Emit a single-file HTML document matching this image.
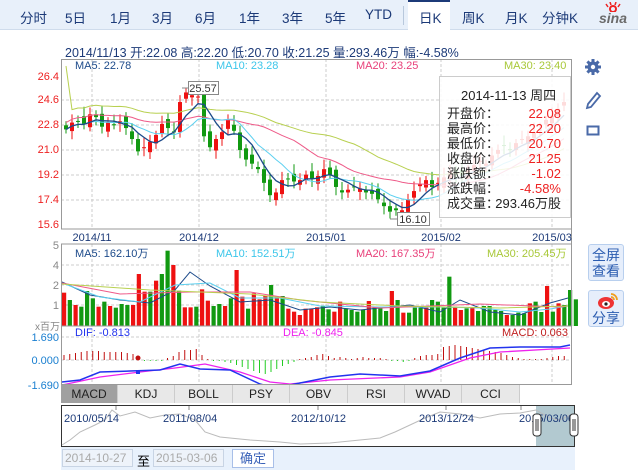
<!DOCTYPE html>
<html><head><meta charset="utf-8"><style>
*{margin:0;padding:0;box-sizing:border-box}
body{width:638px;height:471px;background:#fff;font-family:"Liberation Sans","Noto Sans CJK SC",sans-serif;position:relative;overflow:hidden}
.a{position:absolute;white-space:nowrap}
#nav{position:absolute;left:0;top:0;width:638px;height:30px;background:#e8f0fa;border-bottom:1px solid #cfdcec}
#nav span{position:absolute;top:7px;font-size:13.5px;color:#1c3a78}
.btn{position:absolute;left:588px;width:36px;background:#e6eefb;border:1px solid #b8cfee;border-radius:3px;color:#2b5cb0;font-size:14px;line-height:16px;text-align:center}
.tab{position:absolute;top:385px;height:18px;background:#e8e8e8;border-right:1px solid #ccc;font-size:12px;text-align:center;line-height:18px;color:#222}
</style></head><body>
<div id="nav">
<span style="left:20px">分时</span><span style="left:65px">5日</span><span style="left:110px">1月</span><span style="left:152px">3月</span><span style="left:195px">6月</span><span style="left:239px">1年</span><span style="left:282px">3年</span><span style="left:325px">5年</span><span style="left:365px">YTD</span>
<div style="position:absolute;left:403px;top:6px;width:1px;height:19px;background:#b8c8dc"></div>
<div style="position:absolute;left:408px;top:0;width:42px;height:31px;background:#fff;border-top:2px solid #1c3a78"></div>
<span style="left:419px">日K</span><span style="left:462px">周K</span><span style="left:505px">月K</span><span style="left:542px">分钟K</span>
<span style="left:599px;top:10px;font-size:14px;font-style:italic;font-weight:bold;color:#6b6b6b">sina</span>
<svg style="position:absolute;left:605px;top:2px" width="16" height="10"><circle cx="8" cy="7" r="3" fill="none" stroke="#e22" stroke-width="2"/><path d="M3 5L1 2M6 3L5 0M10 3L11 0M13 5L15 2" stroke="#e22" stroke-width="1.5"/></svg>
</div>
<div class="a" style="left:65px;top:42px;font-size:12.5px;color:#1c3a78">2014/11/13 开:22.08 高:22.20 低:20.70 收:21.25 量:293.46万 幅:-4.58%</div>
<svg id="ch" class="a" style="left:0;top:0" width="638" height="471"></svg>
<div class="a" style="left:75px;top:60px;font-size:11px;color:#1c4a8a">MA5: 22.78</div>
<div class="a" style="left:216px;top:60px;font-size:11px;color:#3cc6ea">MA10: 23.28</div>
<div class="a" style="left:356px;top:60px;font-size:11px;color:#e8407a">MA20: 23.25</div>
<div class="a" style="left:504px;top:60px;font-size:11px;color:#a8c838">MA30: 23.40</div>
<div class="a" style="left:75px;top:245px;font-size:11px;color:#1c4a8a">MA5: 162.10万</div>
<div class="a" style="left:216px;top:245px;font-size:11px;color:#3cc6ea">MA10: 152.51万</div>
<div class="a" style="left:356px;top:245px;font-size:11px;color:#e8407a">MA20: 167.35万</div>
<div class="a" style="left:487px;top:245px;font-size:11px;color:#a8c838">MA30: 205.45万</div>
<div class="a" style="left:75px;top:327px;font-size:11px;color:#2233ee">DIF: -0.813</div>
<div class="a" style="left:283px;top:327px;font-size:11px;color:#ee22ee">DEA: -0.845</div>
<div class="a" style="left:502px;top:327px;font-size:11px;color:#c02020">MACD: 0.063</div>
<div class="a" style="left:439px;top:76px;width:132px;height:142px;background:rgba(255,255,255,0.85);border:1px solid #ccc;font-size:13px;line-height:15px;color:#222">
<div style="position:absolute;left:21px;top:11px">2014-11-13 周四</div>
<div style="position:absolute;left:7px;top:29px">开盘价：<br>最高价：<br>最低价：<br>收盘价：<br>涨跌额：<br>涨跌幅：<br>成交量：</div>
<div style="position:absolute;right:9px;top:29px;text-align:right;color:#ee2222">22.08<br>22.20<br>20.70<br>21.25<br>-1.02<br>-4.58%<br><span style="color:#222">293.46万股</span></div>
</div>
<div class="btn" style="top:244px;height:37px;padding-top:2px">全屏<br>查看</div>
<div class="btn" style="top:290px;height:37px;padding-top:19px">分享</div>
<svg class="a" style="left:597px;top:292px" width="22" height="18"><ellipse cx="9" cy="11" rx="8" ry="6" fill="#e33"/><ellipse cx="9" cy="12" rx="4" ry="3" fill="#fff"/><circle cx="9" cy="12" r="1.6" fill="#222"/><path d="M14 2a6 6 0 0 1 6 6M14 5a3 3 0 0 1 3 3" stroke="#f0a020" stroke-width="1.8" fill="none"/></svg>
<svg class="a" style="left:584px;top:58px" width="20" height="80">
<g transform="translate(9,9)" fill="#4a6aa8"><circle r="5.5"/><g stroke="#4a6aa8" stroke-width="3"><path d="M0-8V8M-8 0H8M-5.6-5.6L5.6 5.6M-5.6 5.6L5.6-5.6"/></g><circle r="2.2" fill="#fff"/></g>
<path d="M4 46L13 35l3 3-9 11-4 1z" fill="none" stroke="#4a6aa8" stroke-width="1.8"/>
<rect x="3.5" y="68.5" width="11" height="8" fill="none" stroke="#4a6aa8" stroke-width="2"/>
</svg>
<div class="tab" style="left:61px;width:57px;background:#a0a0a0">MACD</div>
<div class="tab" style="left:118px;width:57px">KDJ</div>
<div class="tab" style="left:175px;width:58px">BOLL</div>
<div class="tab" style="left:233px;width:57px">PSY</div>
<div class="tab" style="left:290px;width:58px">OBV</div>
<div class="tab" style="left:348px;width:57px">RSI</div>
<div class="tab" style="left:405px;width:57px">WVAD</div>
<div class="tab" style="left:462px;width:58px">CCI</div>
<div class="a" style="left:61px;top:447px;width:514px;height:23px;background:#e8f1fc"></div>
<div class="a" style="left:62px;top:449px;width:71px;height:18px;border:1px solid #c8d4e4;background:#eef3fa;color:#aaa;font-size:12px;line-height:16px;padding-left:2px">2014-10-27</div>
<div class="a" style="left:137px;top:451px;font-size:13px;color:#000">至</div>
<div class="a" style="left:153px;top:449px;width:71px;height:18px;border:1px solid #c8d4e4;background:#eef3fa;color:#aaa;font-size:12px;line-height:16px;padding-left:2px">2015-03-06</div>
<div class="a" style="left:232px;top:449px;width:42px;height:19px;border:1px solid #a8bfe8;background:#fff;color:#3a62b8;font-size:13px;text-align:center;line-height:17px">确定</div>
<script>
var s='';function L(x1,y1,x2,y2,c,w,d){s+='<line x1="'+x1+'" y1="'+y1+'" x2="'+x2+'" y2="'+y2+'" stroke="'+c+'" stroke-width="'+(w||1)+'"'+(d?' stroke-dasharray="'+d+'"':'')+'/>';}
function R(x,y,w,h,c){s+='<rect x="'+x+'" y="'+y+'" width="'+w+'" height="'+h+'" fill="'+c+'"/>';}
function T(x,y,t,c,sz,a){s+='<text x="'+x+'" y="'+y+'" fill="'+c+'" font-size="'+(sz||11)+'" text-anchor="'+(a||'start')+'" font-family="Liberation Sans">'+t+'</text>';}
function P(pts,c,w){s+='<polyline fill="none" stroke="'+c+'" stroke-width="'+(w||1)+'" points="'+pts.map(function(p){return p[0].toFixed(1)+','+p[1].toFixed(1)}).join(' ')+'"/>';}
// grids
[100,125,150,175,200].forEach(function(y){L(61,y,571,y,'#ccc',1,'3,2')});
[92,199,326,441,552].forEach(function(x){L(x,59,x,229,'#ccc',1,'3,2');L(x,244,x,385,'#ccc',1,'3,2')});
[265,285,305].forEach(function(y){L(61,y,571,y,'#ccc',1,'3,2')});
L(61,337,571,337,'#ccc',1,'3,2');L(61,360,571,360,'#ccc',1,'3,2');
// price
var c=[22.5,23.0,23.1,22.9,23.6,23.4,22.7,23.0,22.8,23.1,22.6,21.8,20.9,21.2,21.6,22.1,22.9,22.6,22.3,24.5,25.2,25.0,24.9,22.0,21.2,21.8,22.3,23.2,22.4,21.0,20.3,20.0,19.6,18.6,17.7,17.9,18.8,18.9,18.7,18.8,19.2,18.9,19.1,19.6,19.2,18.3,17.9,18.1,18.3,18.2,17.9,17.8,17.4,16.9,16.5,16.6,16.6,17.4,18.0,18.5,18.8,18.3,18.6,19.0,19.4,19.2,19.1,19.5,19.9,20.2,20.0,20.6,21.0,21.3,21.0,21.5,21.8,22.0,22.3,22.5,23.2,23.5,24.0,24.5];
function Y(p){return 76+(26.4-p)*13.7}
var pts5=[],pts10=[],pts20=[],pts30=[];
for(var i=0;i<c.length;i++){var x=64+6*i,o=i?c[i-1]+((i*37)%7-3)*0.12:22.8,cl=c[i];var hi=Math.max(o,cl)+0.3+((i*13)%5)*0.1,lo=Math.min(o,cl)-0.3-((i*7)%4)*0.1;var col=cl>=o?'#ee1111':'#119911';
L(x+2,Y(hi),x+2,Y(lo),col);var h=Math.max(1,Math.abs(Y(o)-Y(cl)));R(x,Math.min(Y(o),Y(cl)),4,h,col);
function ma(n){var t=0,k=0;for(var j=Math.max(0,i-n+1);j<=i;j++){t+=c[j];k++}var b=n>=20?(n==30?1.2-i*0.003:0.5):0;return [x+2,Y(t/k+b)]}
pts5.push(ma(5));pts10.push(ma(10));pts20.push(ma(20));pts30.push(ma(30));}
pts30[0][1]=66;
P(pts30,'#b8d050');P(pts20,'#ee5a88');P(pts10,'#5cd0f0');P(pts5,'#1c4a8a',1.3);
s+='<rect x="188.5" y="81.5" width="30" height="13" fill="#fff" stroke="#888"/>';T(203,92,'25.57','#333',11,'middle');L(182,88,188,88,'#888');
s+='<rect x="397.5" y="212.5" width="32" height="13" fill="#fff" stroke="#888"/>';T(413,223,'16.10','#333',11,'middle');L(390,219,397,219,'#888');
// volume
var vt=[188,210,225,230,183,205,230,215,228,233,222,225,225,132,185,185,152,132,62,105,182,232,232,230,178,212,228,222,228,205,120,200,236,190,208,198,165,200,198,236,245,255,236,236,232,228,238,245,215,235,240,245,240,213,233,233,243,183,210,248,248,233,233,233,210,215,233,140,230,240,235,232,243,228,228,240,243,255,255,248,250,220,215,246,168,245,220,225,180,208];
var vc='rgrgggrgrgggrrrgrggrgrrgrrggrgrrgrrrgrgrrrrrrggrrggggrgggrgrgggrggggrrgrgggggrgggrggrgr';
for(i=0;i<vt.length;i++){var x=62+i*5.75,y=230+vt[i]/3;R(x,y,4.2,326-y,vc[i]=='r'?'#ee1111':'#119911');}
P([[62,282],[90,295],[120,300],[150,303],[175,290],[190,272],[210,286],[240,302],[270,300],[300,310],[330,307],[360,310],[410,305],[440,312],[460,300],[490,312],[520,315],[550,303],[568,298]],'#1c4a8a');
P([[62,283],[100,297],[140,302],[175,285],[210,283],[240,298],[280,298],[320,306],[380,307],[440,307],[480,308],[520,312],[550,309],[568,306]],'#5cd0f0');
P([[62,283],[120,294],[190,292],[250,292],[300,300],[380,308],[480,304],[560,307],[568,306]],'#ee5a88');
P([[62,284],[150,290],[250,294],[320,302],[400,306],[500,308],[568,306]],'#b8d050');
// macd hist
var mh=[5,6,7,8,9,9,9,8,8,8,8,7,6,3,-1,-1,-1,-1,2,4,8,10,10,11,5,1,-1,-1,-2,-3,-5,-7,-9,-11,-13,-14,-12,-9,-6,-4,-2,1,2,3,5,6,4,2,3,2,1,2,3,2,2,2,1,-1,-1,-2,-1,2,4,5,5,6,13,14,15,14,13,12,11,10,9,8,7,5,3,2,1,1,1,1,2,3,4,4];
for(i=0;i<mh.length;i++){var x=64+i*5.75;if(mh[i]>0)L(x,360,x,360-mh[i],'#c01010');else L(x,360,x,360-mh[i],'#22cc22');}
P([[62,385],[100,377],[140,372],[175,368],[205,364],[240,372],[270,382],[290,384],[330,380],[400,377],[430,372],[470,358],[500,352],[570,348]],'#ee22ee',1.3);
P([[62,382],[80,380],[100,372],[130,371],[160,370],[180,364],[200,369],[230,370],[260,384],[275,388],[300,383],[330,377],[360,374],[400,376],[430,371],[460,358],[490,348],[520,347],[560,347],[570,345]],'#2233ee',1.5);
s+='<circle cx="138" cy="358" r="2.5" fill="#c01010"/><rect x="136" y="370" width="4" height="4" fill="#2233ee"/>';
// frame
s+='<rect x="61.5" y="59.5" width="510" height="325" fill="none" stroke="#999"/>';L(61,229,571,229,'#999');L(61,244,571,244,'#999');L(61,326,571,326,'#999');
s+='<rect x="61" y="229.5" width="510" height="14" fill="#fff"/>';L(61,244,571,244,'#999');
[['2014/11',92],['2014/12',199],['2015/01',326],['2015/02',441],['2015/03',552]].forEach(function(d){T(d[1],241,d[0],'#1c3a78',11,'middle')});
[['26.4',80],['24.6',103],['22.8',128],['21.0',153],['19.2',178],['17.4',203],['15.6',228]].forEach(function(d){T(59,d[1],d[0],'#ee2222',11,'end')});
[['5',249],['4',269],['2',289],['1',309]].forEach(function(d){T(59,d[1],d[0],'#888',11,'end')});
T(60,330,'x百万','#888',10,'end');T(59,341,'1.690','#1a7fd0',11,'end');T(59,364,'0.000','#1a7fd0',11,'end');T(59,389,'-1.690','#1a7fd0',11,'end');
// nav chart
s+='<rect x="61.5" y="405.5" width="513" height="41" fill="#fff" stroke="#333"/>';
s+='<rect x="536" y="406" width="38" height="40" fill="#b2c9d0"/>';
P([[62,445],[70,440],[80,432],[95,425],[105,420],[112,410],[120,416],[135,412],[150,418],[165,415],[180,414],[195,420],[205,432],[220,437],[250,440],[280,442],[300,444],[330,443],[360,440],[380,438],[395,432],[410,425],[425,418],[440,412],[460,414],[480,418],[500,414],[520,413],[536,410],[550,418],[560,420],[572,414]],'#bbb');
[['2010/05/14',64],['2011/08/04',163],['2012/10/12',291],['2013/12/24',419],['2015/03/06',519]].forEach(function(d){T(d[1],422,d[0],'#1c3a78',11)});
[[116,406],[189,406],[318,406],[446,406],[521,406]].forEach(function(p){L(p[0],p[1],p[0],p[1]+4,'#888')});
s+='<rect x="533" y="414" width="8" height="22" rx="3" fill="#fff" stroke="#333"/><rect x="570" y="414" width="8" height="22" rx="3" fill="#fff" stroke="#333"/>';
L(536,419,536,431,'#333');L(538,419,538,431,'#333');L(573,419,573,431,'#333');L(575,419,575,431,'#333');
document.getElementById('ch').innerHTML=s;
</script>
</body></html>
